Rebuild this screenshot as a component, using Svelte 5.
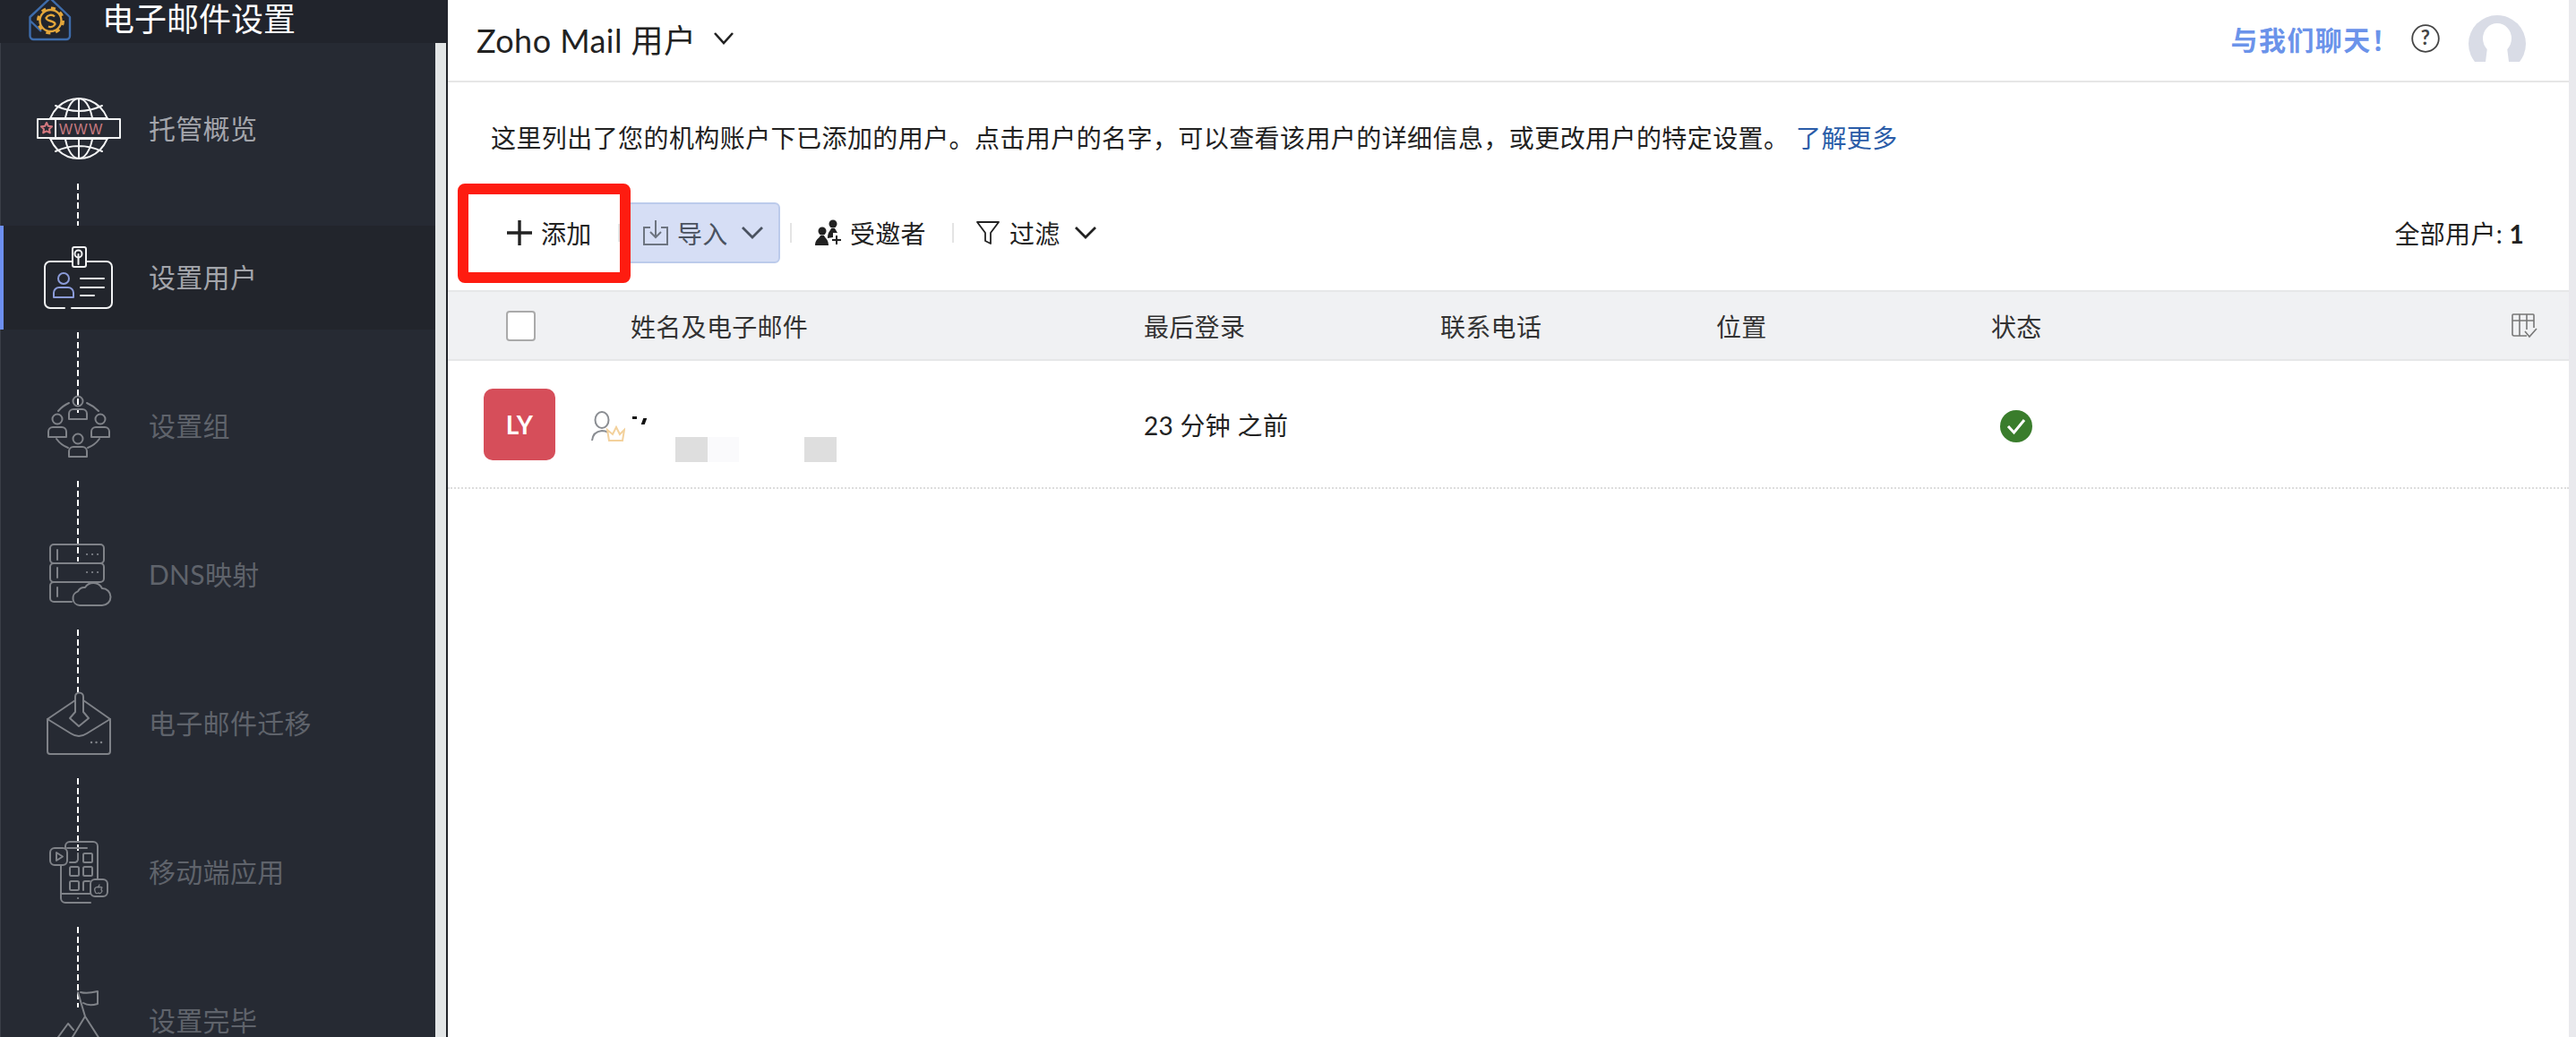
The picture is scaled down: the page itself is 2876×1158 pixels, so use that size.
<script>
	const nav = [
		{ key: 'host', label: '托管概览', state: 'done' },
		{ key: 'user', label: '设置用户', state: 'active' },
		{ key: 'group', label: '设置组', state: 'dim' },
		{ key: 'dns', label: 'DNS映射', state: 'dim' },
		{ key: 'mail', label: '电子邮件迁移', state: 'dim' },
		{ key: 'mobile', label: '移动端应用', state: 'dim' },
		{ key: 'flag', label: '设置完毕', state: 'dim' }
	];
</script>

<div class="page">
	<aside class="sidebar">
		<div class="side-head">
			<svg class="side-logo" width="48" height="46" viewBox="0 0 48 46" fill="none">
				<path d="M24 -2 L1.5 19 V40 a4 4 0 0 0 4 4 H42 a4 4 0 0 0 4-4 V19 Z M1.5 23 L14 35" stroke="#3e6cab" stroke-width="2.4" stroke-linejoin="round" />
				<circle cx="24.5" cy="23" r="12" fill="#21242c" stroke="#e3a63b" stroke-width="2.4" />
				<circle cx="24.5" cy="23" r="14" stroke="#e3a63b" stroke-width="3" stroke-dasharray="5 6" />
				<path d="M29 18.5 a6 6 0 0 0-9.5 1.5 c0 4 10 3 10 7 a6 6 0 0 1-7.5 2.5" stroke="#e3a63b" stroke-width="2.4" />
			</svg>
			<span>电子邮件设置</span>
		</div>
		<div class="side-body">
			<nav class="steps">
				{#each nav as item}
					<div class="step {item.state}">
						<svg class="step-icon" width="100" height="80" viewBox="0 0 100 80" fill="none" stroke="currentColor" stroke-width="2" stroke-linecap="round" stroke-linejoin="round">
							{#if item.key === 'host'}
								<circle cx="51" cy="39.5" r="33.5" />
								<ellipse cx="51" cy="39.5" rx="16" ry="33.5" />
								<path d="M51 6 V29 M51 50 V73 M25 14 Q51 26 77 14 M25 65 Q51 53 77 65 M19 28 H83 M19 51 H83" />
								<rect x="5" y="29" width="92" height="21" fill="#262a33" />
								<path d="M25 29 V50" />
								<path d="M15 33 l1.8 3.8 4.2.5-3 2.9.8 4.2-3.8-2-3.8 2 .8-4.2-3-2.9 4.2-.5 Z" stroke="#d4787f" />
								<text x="29" y="46" class="www">WWW</text>
							{:else if item.key === 'user'}
								<path d="M44 22 H19 a6 6 0 0 0-6 6 V68 a6 6 0 0 0 6 6 H35 M43 74 H82 a6 6 0 0 0 6-6 V28 a6 6 0 0 0-6-6 H59" />
								<rect x="44" y="6" width="15" height="22" rx="2" />
								<circle cx="50.5" cy="13.5" r="4" />
								<path d="M50.5 14 V25" />
								<circle cx="34" cy="41" r="6" stroke="#8b9bd8" />
								<path d="M23 62 V57 a6 6 0 0 1 6-6 H39 a6 6 0 0 1 6 6 V62 Z" stroke="#8b9bd8" />
								<path d="M53 41 H79 M53 51 H79 M53 60 H68" />
							{:else if item.key === 'group'}
								<circle cx="50" cy="12" r="5.5" />
								<path d="M40 32 V26 a5 5 0 0 1 5-5 H55 a5 5 0 0 1 5 5 V32 Z" />
								<circle cx="27" cy="32" r="5.5" />
								<path d="M17 52 V46 a5 5 0 0 1 5-5 H32 a5 5 0 0 1 5 5 V52 Z" />
								<circle cx="75" cy="32" r="5.5" />
								<path d="M65 52 V46 a5 5 0 0 1 5-5 H80 a5 5 0 0 1 5 5 V52 Z" />
								<circle cx="50" cy="54" r="5.5" />
								<path d="M40 74 V68 a5 5 0 0 1 5-5 H55 a5 5 0 0 1 5 5 V74 Z" />
								<path d="M28 23 Q33 17 40 14 M60 14 Q67 17 73 23 M26 54 Q31 61 39 64 M61 64 Q69 61 74 54" />
							{:else if item.key === 'dns'}
								<rect x="19" y="6" width="60" height="21" rx="4" />
								<rect x="19" y="27" width="60" height="21" rx="4" />
								<path d="M43 48 H23 a4 4 0 0 0-4 4 V66 a4 4 0 0 0 4 4 H43" />
								<path d="M27 12 V23 M27 32 V43 M27 54 V64" />
								<path d="M60 17 H60.1 M66 17 H66.1 M72 17 H72.1 M60 37 H60.1 M66 37 H66.1 M72 37 H72.1" stroke-width="2.2" />
								<path d="M52 74 a8 8 0 0 1-2-15.6 a8 8 0 0 1 8-4.4 a11 11 0 0 1 19 1 a9.5 9.5 0 0 1 0 19 Z" fill="#262a33" />
							{:else if item.key === 'mail'}
								<path d="M47 14 L16 35 V71 a3 3 0 0 0 3 3 H83 a3 3 0 0 0 3-3 V35 L56 14" />
								<path d="M16 35 L42 51 Q51 57 60 51 L86 35" />
								<path d="M47 27 V10 a4.5 4.5 0 0 1 9 0 V27 L62 34 L51 43 L41 34 Z" fill="#262a33" />
								<path d="M65 61 H65.1 M70.5 61 H70.6 M76 61 H76.1" stroke-width="2.4" />
							{:else if item.key === 'mobile'}
								<path d="M36 13 V11 a5 5 0 0 1 5-5 H67 a5 5 0 0 1 5 5 V48 M64 74 H36 a5 5 0 0 1-5-5 V32 M31 64 H64 M38 13 H60" />
								<path d="M50 69 H50.1" stroke-width="2.2" />
								<rect x="19" y="13" width="19" height="19" rx="5" />
								<path d="M26 18 V27 L33 22.5 Z" />
								<path d="M41 29 H47 a4 4 0 0 0 3-3 V19" />
								<rect x="56" y="19" width="10" height="10" rx="1.5" />
								<rect x="41" y="34" width="10" height="10" rx="1.5" />
								<rect x="56" y="34" width="10" height="10" rx="1.5" />
								<rect x="41" y="50" width="10" height="10" rx="1.5" />
								<path d="M56 60 V52 a2 2 0 0 1 2-2 H63" />
								<rect x="64" y="48" width="19" height="19" rx="5" />
								<path d="M74 54 q-1 2 -1 2 m-3 1 q3-1 3 0 q2-1 4 0 q-2 2 0 4 q-2 4-4 2 q-3 2-4-2 q-1-3 1-4" stroke-width="1.3" />
							{:else}
								<path d="M50 8 L58 35 L74 60 M58 35 L44 58 L32 80 M45 50 L39 43 L28 58 L20 70 M74 60 L86 80" />
								<path d="M53 8 Q60 10 72 7 V21 Q62 24 56 20" />
							{/if}
						</svg>
						<span>{item.label}</span>
					</div>
				{/each}
			</nav>
			<div class="side-track"></div>
		</div>
	</aside>

	<main class="main">
		<header class="topbar">
			<div class="title">
				<span>Zoho Mail 用户</span>
				<svg width="22" height="14" viewBox="0 0 22 14" fill="none" stroke="#222" stroke-width="2.6"><path d="M1 1 L11 12 L21 1" /></svg>
			</div>
			<div class="top-right">
				<span class="chat">与我们聊天！</span>
				<svg class="help" width="32" height="32" viewBox="0 0 32 32" fill="none">
					<circle cx="16" cy="16" r="14.8" stroke="#444" stroke-width="1.8" />
					<text x="16" y="23" class="help-mark">?</text>
				</svg>
				<svg width="64" height="52" viewBox="0 0 64 52">
					<circle cx="32" cy="32" r="32" fill="#d9dce6" />
					<ellipse cx="32" cy="26" rx="16" ry="17" fill="#fff" />
					<path d="M21 36 H43 L45 52 H19 Z" fill="#fff" />
				</svg>
			</div>
		</header>

		<p class="intro">这里列出了您的机构账户下已添加的用户。点击用户的名字，可以查看该用户的详细信息，或更改用户的特定设置。 <a href="#more">了解更多</a></p>

		<div class="toolbar">
			<div class="add">
				<svg width="28" height="28" viewBox="0 0 28 28" stroke="#222" stroke-width="3.4"><path d="M14 0 V28 M0 14 H28" /></svg>
				<span>添加</span>
				<i class="add-sep"></i>
			</div>
			<div class="import">
				<svg width="28" height="28" viewBox="0 0 28 28" fill="none" stroke="#6d7480" stroke-width="2"><path d="M8 8 H1 V27 H27 V8 H20 M14 0 V19 M8 13 L14 19 L20 13" /></svg>
				<span>导入</span>
				<svg class="chev" width="24" height="14" viewBox="0 0 24 14" fill="none" stroke="#4a5260" stroke-width="2.8"><path d="M1 1 L12 12 L23 1" /></svg>
			</div>
			<i class="sep first"></i>
			<div class="tool invited">
				<svg width="30" height="30" viewBox="0 0 30 30" fill="#222">
					<circle cx="8" cy="13" r="4.5" />
					<path d="M0 29 C0 22 5 21 6 18 H10 C11 21 15 22 15 29 Z" />
					<circle cx="20" cy="5" r="4.5" />
					<path d="M14 21 C14 14 17 13 18 10 H22 C23 12 24 13 25 15 H20 V20 Z" />
					<path d="M24 18 V28 M19 23 H29" stroke="#222" stroke-width="2" />
				</svg>
				<span>受邀者</span>
			</div>
			<i class="sep second"></i>
			<div class="tool filter">
				<svg width="26" height="28" viewBox="0 0 26 28" fill="none" stroke="#222" stroke-width="1.8" stroke-linejoin="round"><path d="M1 2 H25 L16 14 V26 L10 23 V14 Z" /></svg>
				<span>过滤</span>
				<svg class="chev" width="24" height="14" viewBox="0 0 24 14" fill="none" stroke="#222" stroke-width="2.8"><path d="M1 1 L12 12 L23 1" /></svg>
			</div>
			<div class="total">全部用户: <b>1</b></div>
		</div>

		<div class="thead">
			<span class="check"></span>
			<span>姓名及电子邮件</span>
			<span>最后登录</span>
			<span>联系电话</span>
			<span>位置</span>
			<span>状态</span>
			<svg class="cols" width="30" height="30" viewBox="0 0 30 30" fill="none" stroke="#777" stroke-width="1.6">
				<path d="M18 26 H4 a2 2 0 0 1-2-2 V3 a1 1 0 0 1 1-1 H25 a1 1 0 0 1 1 1 V17 M2 9 H26 M10 2 V26 M18 2 V19" />
				<path d="M16 21 L21 27 L29 18" />
			</svg>
		</div>

		<div class="row">
			<div class="avatar">LY</div>
			<div class="name">
				<svg width="38" height="36" viewBox="0 0 38 36" fill="none">
					<ellipse cx="12" cy="10" rx="7.5" ry="9" stroke="#8a8d92" stroke-width="2" />
					<path d="M1 33 Q2 23 12 22 Q16 22 19 24" stroke="#8a8d92" stroke-width="2" />
					<path d="M20 33 L18 21 L24 26 L28 18 L32 26 L37 21 L35 33 Z" stroke="#f3d19c" stroke-width="2" />
				</svg>
				<i class="speck one"></i>
				<i class="speck two"></i>
				<i class="blur a"></i>
				<i class="blur b"></i>
				<i class="blur c"></i>
			</div>
			<div class="login">23 分钟 之前</div>
			<div class="status">
				<svg width="36" height="36" viewBox="0 0 36 36" fill="none">
					<circle cx="18" cy="18" r="18" fill="#3a7d2c" />
					<path d="M9 18 L15.5 25 L27 11" stroke="#fff" stroke-width="3" />
				</svg>
			</div>
		</div>
	</main>
	<div class="page-track"></div>
</div>

<style>
	:global(body) {
		margin: 0;
		overflow: hidden;
		background: #fff;
	}

	.page {
		display: flex;
		width: 2876px;
		height: 1158px;
		overflow: hidden;
		font-family: 'Lato', 'Noto Sans CJK SC', sans-serif;
		font-size: 28px;
		letter-spacing: 0.3px;
		color: #222;
	}

	.sidebar {
		width: 500px;
		flex: none;
		display: flex;
		flex-direction: column;
		background: #1f2228;
	}

	.side-head {
		height: 48px;
		flex: none;
		display: flex;
		align-items: flex-start;
		gap: 34px;
		padding-left: 32px;
		background: #21242c;
		color: #fff;
		font-size: 36px;
		line-height: 42px;
		letter-spacing: 0;
	}

	.side-logo {
		flex: none;
		overflow: visible;
	}

	.side-body {
		flex: 1;
		min-height: 0;
		display: flex;
		padding-right: 2px;
	}

	.steps {
		flex: 1;
		display: flex;
		flex-direction: column;
		gap: 50px;
		padding-top: 38px;
		background: #262a33;
		box-shadow: inset 1px 0 0 #3a3e47;
		overflow: hidden;
	}

	.side-track {
		width: 12px;
		background: #e2e5e6;
	}

	.step {
		position: relative;
		flex: none;
		height: 116px;
		display: flex;
		align-items: center;
		gap: 29px;
		padding-left: 37px;
		font-size: 30px;
		letter-spacing: 0.3px;
		color: #5f636b;
	}

	.step span {
		margin-bottom: 5px;
	}

	.step-icon {
		flex: none;
		color: #7f8288;
	}

	.step::after {
		content: '';
		position: absolute;
		left: 86px;
		top: calc(100% + 3px);
		width: 2px;
		height: 90px;
		background: repeating-linear-gradient(to bottom, #fff 0 7px, transparent 7px 10.6px);
	}

	.step:first-child::after {
		height: 70px;
	}

	.step:last-child::after {
		display: none;
	}

	.step.done,
	.step.active {
		color: #a3a5ab;
	}

	.step.done .step-icon,
	.step.active .step-icon {
		color: #f2f3f4;
	}

	.step.active {
		background: #22252c;
		box-shadow: inset 4px 0 0 #6d8ff0;
	}

	.www {
		font-family: 'Liberation Sans', sans-serif;
		font-size: 16px;
		letter-spacing: 1.5px;
		fill: #c87a80;
		stroke: none;
	}

	.main {
		width: 2368px;
		flex: none;
		display: flex;
		flex-direction: column;
	}

	.page-track {
		flex: 1;
		background: #e9e9ed;
	}

	.topbar {
		height: 92px;
		flex: none;
		box-sizing: border-box;
		display: flex;
		align-items: center;
		justify-content: space-between;
		padding: 0 48px 4px 32px;
		border-bottom: 2px solid #e6e6e6;
	}

	.title {
		display: flex;
		align-items: center;
		gap: 20px;
		font-size: 36px;
		letter-spacing: 0.45px;
	}

	.top-right {
		display: flex;
		align-items: center;
	}

	.chat {
		font-size: 30px;
		font-weight: 700;
		letter-spacing: 1.4px;
		color: #6b93ea;
	}

	.help {
		margin-left: 13px;
		margin-right: 32px;
	}

	.help-mark {
		font-family: 'Lato', sans-serif;
		font-size: 22px;
		font-weight: 700;
		fill: #444;
		text-anchor: middle;
	}

	.intro {
		height: 62px;
		flex: none;
		margin: 0;
		padding: 42px 0 0 48px;
		line-height: 40px;
		letter-spacing: 0.42px;
		color: #222;
	}

	.intro a {
		color: #2a5ca8;
		text-decoration: none;
	}

	.toolbar {
		height: 128px;
		flex: none;
		display: flex;
		align-items: center;
		padding: 0 50px 0 11px;
	}

	.add {
		position: relative;
		z-index: 1;
		box-sizing: border-box;
		width: 193px;
		height: 111px;
		display: flex;
		align-items: center;
		gap: 10px;
		padding-left: 43px;
		padding-right: 0;
		background: #fff;
		border: 12px solid #fe1c10;
		border-radius: 8px;
	}

	.add-sep {
		width: 2px;
		height: 20px;
		margin-left: auto;
		background: #e4e4e4;
	}

	.import {
		box-sizing: border-box;
		width: 175px;
		height: 68px;
		margin-left: -8px;
		display: flex;
		align-items: center;
		padding-left: 20px;
		background: #d6def5;
		border: 2px solid #bccbeb;
		border-radius: 6px;
		color: #4a5260;
	}

	.import span {
		margin-left: 10px;
	}

	.import .chev {
		margin-left: 15px;
	}

	.sep {
		width: 2px;
		height: 22px;
		background: #e4e4e4;
	}

	.sep.first {
		margin-left: 11px;
	}

	.tool {
		display: flex;
		align-items: center;
	}

	.invited {
		margin-left: 26px;
		gap: 9px;
	}

	.sep.second {
		margin-left: 29px;
	}

	.filter {
		margin-left: 25px;
		gap: 11px;
	}

	.filter .chev {
		margin-left: 5px;
	}

	.total {
		margin-left: auto;
	}

	.total b {
		font-weight: 700;
	}

	.thead {
		box-sizing: border-box;
		height: 79px;
		flex: none;
		display: grid;
		grid-template-columns: 139px 573px 331px 308px 307px 580px 1fr;
		align-items: center;
		padding-left: 65px;
		background: #f0f1f3;
		border-top: 2px solid #e6e7e8;
		border-bottom: 2px solid #e6e7e8;
		color: #333;
	}

	.check {
		box-sizing: border-box;
		width: 33px;
		height: 34px;
		background: #fff;
		border: 2px solid #aaa;
		border-radius: 4px;
	}

	.row {
		box-sizing: border-box;
		height: 143px;
		flex: none;
		display: grid;
		grid-template-columns: 120px 617px 946px 1fr;
		align-items: center;
		padding-left: 40px;
		border-bottom: 2px dotted #ddd;
	}

	.avatar {
		width: 80px;
		height: 80px;
		display: flex;
		align-items: center;
		justify-content: center;
		background: #d64e5a;
		border-radius: 10px;
		color: #fff;
		font-size: 28px;
		font-weight: 700;
	}

	.name {
		position: relative;
		height: 80px;
		display: flex;
		align-items: center;
	}

	.name svg {
		margin-top: 6px;
	}

	.speck {
		position: absolute;
		background: #111;
	}

	.speck.one {
		left: 46px;
		top: 31px;
		width: 5px;
		height: 3px;
	}

	.speck.two {
		left: 57px;
		top: 33px;
		width: 4px;
		height: 7px;
		transform: skewX(-20deg);
	}

	.blur {
		position: absolute;
		top: 54px;
		height: 28px;
	}

	.blur.a {
		left: 94px;
		width: 36px;
		background: #dedede;
	}

	.blur.b {
		left: 130px;
		width: 35px;
		background: #fafafc;
	}

	.blur.c {
		left: 238px;
		width: 36px;
		background: #dedede;
	}

	.status {
		display: flex;
		padding: 4px 0 0 10px;
	}
</style>
